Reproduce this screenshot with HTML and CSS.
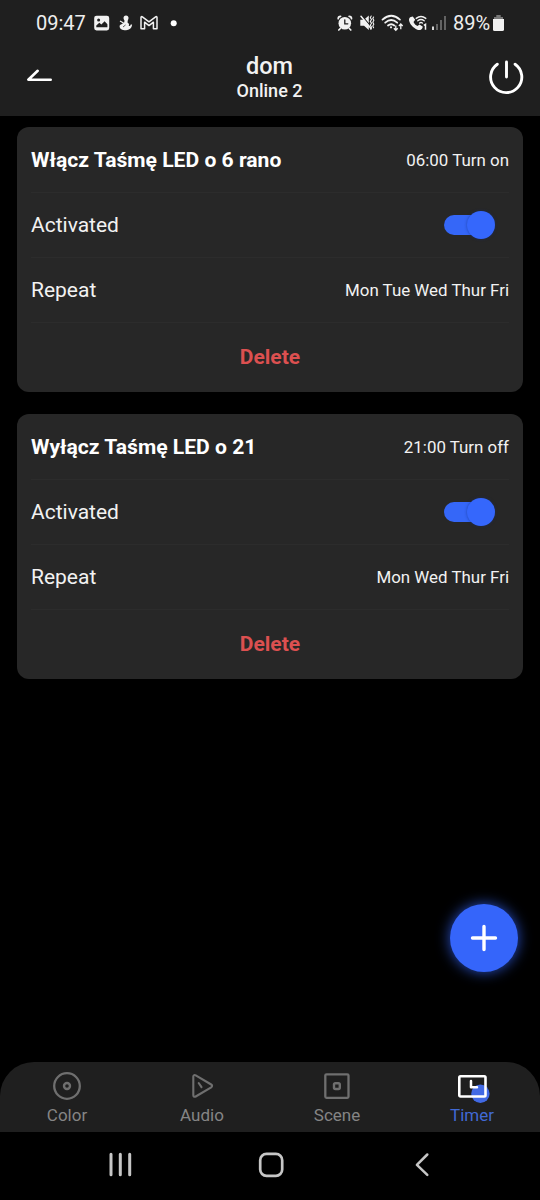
FILE: index.html
```html
<!DOCTYPE html>
<html lang="pl">
<head>
<meta charset="utf-8">
<title>Timer</title>
<link rel="stylesheet" href="styles.css">
</head>
<body>
<div class="screen">
  <header class="top">
    <div class="status">
      <span class="clock">09:47</span>
      <svg class="status-left" width="90" height="24" viewBox="90 10 90 24">
        <rect x="94.2" y="15.8" width="15" height="14.6" rx="2.3" fill="#f2f2f2"/>
        <circle cx="98.6" cy="20" r="1.5" fill="#1f1f1f"/>
        <path d="M96.3 27.3v-1.8l3-2.7 2.1 1.8 3.2-3.4 2.8 3v3.1z" fill="#1f1f1f"/>
        <circle cx="126" cy="18" r="2.5" fill="#f2f2f2"/>
        <path d="M124.5 19.5h3.4l-.4 3.1c1.6.9 1.9 2.3 1.2 3.5 1.2-.1 1.8-.7 2-1.7l1.4.2c-.3 3.8-3 5.7-6.3 5.6-3.7 0-6.2-1.7-6.2-3.8 0-1.2.8-2 2-2.1l2.7-2z" fill="#f2f2f2"/>
        <path d="M120 21l3.5 2M123.3 26.2l2.3-2" stroke="#f2f2f2" stroke-width="1.2"/>
        <path d="M123 27l2.6-2.1" stroke="#1f1f1f" stroke-width=".7"/>
        <path d="M141 28.7V17.5c0-.7.8-1.1 1.4-.7l6.6 5 6.6-5c.6-.4 1.4 0 1.4.7v11.2h-3.6v-6.5l-4.4 3.4-4.4-3.4v6.5z" fill="none" stroke="#f2f2f2" stroke-width="1.5" stroke-linejoin="round"/>
        <circle cx="173.7" cy="23.2" r="3" fill="#fff"/>
      </svg>
      <svg class="status-right" width="116" height="24" viewBox="334 10 116 24">
        <g fill="none" stroke="#f2f2f2" stroke-linecap="round">
          <circle cx="344.8" cy="23.3" r="6.3" fill="#f2f2f2" stroke="none"/>
          <path d="M344.8 19.8v4h3" stroke="#1f1f1f" stroke-width="1.3"/>
          <path d="M338.2 18.7c0-1.6 1-2.4 2.4-2.4M351.5 18.7c0-1.6-1-2.4-2.4-2.4M340.3 28.5l-1.5 1.5M349.3 28.5l1.5 1.5" stroke-width="1.7"/>
          <path d="M360.3 19.7h3.7l4.8-4.1v14.3l-4.8-4.2h-3.7z" fill="#f2f2f2" stroke="none"/>
          <path d="M361.8 15.6l10 12" stroke="#1f1f1f" stroke-width="1.3"/>
          <path d="M361 16.3l10.2 12.5" stroke-width="1.5"/>
          <path d="M371.2 16l-.9 1.7 1.2 1.8-1.2 1.9 1.2 1.9-1.2 1.9 1.2 1.9-.9 2M373.6 17l-.8 1.5 1 1.8-1 2 1 2-1 1.8.8 1.6" stroke-width="1.1"/>
          <path d="M382.5 19.6q8.8-7.8 17.4 0M385.2 22.7q6-5.3 12 0M388 25.5q3.2-2.6 6.3 0" stroke-width="1.8"/>
          <circle cx="391" cy="27.3" r="1.1" fill="#f2f2f2" stroke="none"/>
          <path d="M395.8 25.5v4.5M393.9 28.2l1.9 2 1.9-2M400.8 29.2v-5M398.9 26l1.9-2 1.9 2" stroke-width="1.3" stroke-linecap="butt"/>
          <path d="M410.8 17.1l2-.7 2.4 3.4-1.7 2.1c.9 1.9 2.1 3.2 4 4.1l2-1.6 3.4 2.3-.9 2c-1 1.4-3 1.7-5.2.7-3.6-1.6-6.8-4.9-7.7-8.6-.3-1.5.2-3.1 1.7-3.7z" fill="#f2f2f2" stroke="none"/>
          <path d="M416.2 18.4q4.8-3.8 9.6 0M417.8 20.8q3.2-2.5 6.4 0M419.6 23q1.4-1 2.8 0" stroke-width="1.4"/>
          <path d="M423.8 25.4l1.7-1v5.4" stroke-width="1.5" stroke-linecap="butt"/>
        </g>
        <path d="M433 26.6V30" stroke="#eee" stroke-width="1.8"/>
        <path d="M437 24V30M441 20V30M445 16V30" stroke="#6b6b6b" stroke-width="1.8"/>
      </svg>
      <span class="percent">89%</span>
      <svg width="11" height="18" viewBox="0 0 11 18"><path d="M3.3 1h4.4v2H10v4H1V3h2.3z" fill="#777"/><path d="M0 5h11v10.4a1.6 1.6 0 0 1-1.6 1.6H1.6A1.6 1.6 0 0 1 0 15.4z" fill="#f2f2f2"/></svg>
    </div>
    <div class="bar">
      <svg class="back" width="30" height="16" viewBox="24 67 30 16"><path d="M37.7 70.8l-9.4 8.9h22.4" fill="none" stroke="#fff" stroke-width="2.6" stroke-linecap="round" stroke-linejoin="round"/></svg>
      <div class="heading"><h1>dom</h1><p>Online 2</p></div>
      <svg class="power" width="38" height="38" viewBox="487 58 38 38"><path d="M497.3 64.2a15.6 15.6 0 1 0 17.8 0M506.5 62v15" fill="none" stroke="#fff" stroke-width="2.9" stroke-linecap="round"/></svg>
    </div>
  </header>

  <main class="timers">
    <section class="card">
      <div class="row"><h2 class="name">Włącz Taśmę LED o 6 rano</h2><span class="value">06:00 Turn on</span></div>
      <div class="row"><span class="label">Activated</span><span class="switch"><i class="track"></i><i class="thumb"></i></span></div>
      <div class="row"><span class="label">Repeat</span><span class="value">Mon Tue Wed Thur Fri</span></div>
      <div class="delete">Delete</div>
    </section>
    <section class="card">
      <div class="row"><h2 class="name">Wyłącz Taśmę LED o 21</h2><span class="value">21:00 Turn off</span></div>
      <div class="row"><span class="label">Activated</span><span class="switch"><i class="track"></i><i class="thumb"></i></span></div>
      <div class="row"><span class="label">Repeat</span><span class="value">Mon Wed Thur Fri</span></div>
      <div class="delete">Delete</div>
    </section>
    <div class="add"><svg width="30" height="30" viewBox="0 0 30 30"><path d="M15 3.5v23M3.5 15h23" stroke="#fff" stroke-width="3.4" stroke-linecap="round"/></svg></div>
  </main>

  <nav class="tabs">
    <div class="tab"><svg width="32" height="32" viewBox="0 0 32 32" fill="none" stroke="#6f6f6f"><circle cx="16" cy="16" r="12.8" stroke-width="2.3"/><circle cx="16" cy="16" r="3" stroke-width="2.4"/></svg><span>Color</span></div>
    <div class="tab"><svg width="32" height="32" viewBox="0 0 32 32" fill="none" stroke="#6f6f6f" stroke-width="2.1" stroke-linecap="round"><path d="M7.3 6.5v18.8c0 1.5 1.4 1.8 2.4 1.2l15.5-9.2c1.2-.8 1.2-2.1 0-2.8L9.7 5.3C8.7 4.7 7.3 5 7.3 6.5z"/><path d="M12.7 13l2.8 4.2"/></svg><span>Audio</span></div>
    <div class="tab"><svg width="32" height="32" viewBox="0 0 32 32" fill="none" stroke="#6f6f6f"><rect x="4.3" y="4.4" width="23.2" height="23.4" rx="1.2" stroke-width="2.3"/><rect x="13" y="13.2" width="5.8" height="5.8" rx="1.4" stroke-width="2.4"/></svg><span>Scene</span></div>
    <div class="tab active"><svg width="32" height="32" viewBox="0 0 32 32" fill="none"><circle cx="24.4" cy="23.7" r="9.2" fill="#4169e4"/><rect x="3.3" y="6.2" width="26.2" height="20.3" rx="1.2" stroke="#fff" stroke-width="2.6"/><path d="M15 11v6.3h6" stroke="#fff" stroke-width="2.5" stroke-linecap="round" stroke-linejoin="round"/></svg><span>Timer</span></div>
  </nav>
  <footer class="system">
    <svg width="540" height="68" viewBox="0 1132 540 68" fill="none" stroke="#c6c6c6" stroke-linecap="round">
      <path d="M111 1154.3v20.4M120.3 1154.3v20.4M129.7 1154.3v20.4" stroke-width="3"/>
      <rect x="260.2" y="1153.9" width="22" height="22" rx="6.3" stroke-width="2.7"/>
      <path d="M427.3 1154.5l-10.4 10.4 10.4 10" stroke-width="2.5" stroke-linejoin="round"/>
    </svg>
  </footer>
</div>
</body>
</html>
```
FILE: styles.css
```css
* { box-sizing: border-box; margin: 0; padding: 0; }
body { background: #000; color: #f2f2f2; font-family: Roboto, sans-serif; }
svg { display: block; flex: none; }
.screen { width: 540px; height: 1200px; display: flex; flex-direction: column; overflow: hidden; }

.top { height: 116px; background: #1f1f1f; }
.status { height: 46px; padding: 0 36px; display: flex; align-items: center; }
.clock { width: 54px; font-size: 20px; white-space: nowrap; color: #eee; }
.status-left, .status-right { margin-top: -2px; }
.status-right { margin-left: auto; }
.percent { width: 41px; margin-left: 3px; margin-right: -1px; font-size: 20px; white-space: nowrap; color: #eee; }
.bar { height: 70px; padding: 0 15px 0 24px; display: flex; justify-content: space-between; align-items: flex-start; }
.back { margin-top: 21px; }
.power { margin-top: 12px; }
.heading { margin-top: 6px; text-align: center; margin-left: -2px; }
.heading h1 { font-size: 23.5px; font-weight: 500; line-height: 29px; }
.heading p { font-size: 18px; font-weight: 500; line-height: 20px; }

.timers { flex: 1; padding: 11px 17px 0; display: flex; flex-direction: column; gap: 22.5px; }
.card { height: 264.5px; padding: 0 14px; border-radius: 12px; background: #272727; }
.row { height: 64.7px; display: flex; align-items: center; justify-content: space-between; border-bottom: 1px solid #2c2c2c; }
.row:first-child { height: 66.3px; }
.name { font-size: 21.1px; font-weight: 700; color: #fff; }
.label { font-size: 21px; }
.value { font-size: 16.9px; }
.switch { width: 51px; height: 28px; margin-right: 14px; display: grid; align-items: center; }
.track, .thumb { grid-area: 1 / 1; }
.track { width: 40px; height: 20px; border-radius: 10px; background: #3567f8; }
.thumb { width: 28px; height: 28px; justify-self: end; border-radius: 50%; background: #3567fc; box-shadow: 0 0 3px rgba(20, 45, 120, .6); }
.delete { height: 69px; display: flex; align-items: center; justify-content: center; font-size: 21px; font-weight: 700; color: #dc5050; }
.add { width: 68px; height: 68px; margin: auto 5px 90px auto; display: grid; place-items: center; border-radius: 50%; background: #3565fa; box-shadow: 0 0 14px rgba(53, 101, 250, .8); }

.tabs { height: 70px; padding-top: 8px; display: grid; grid-template-columns: repeat(4, 1fr); background: #1f1f1f; border-radius: 34px 34px 0 0; }
.tab { display: flex; flex-direction: column; align-items: center; font-size: 17px; line-height: 20px; color: #858585; }
.tab svg { overflow: visible; margin-left: -1px; }
.tab span { margin-top: 3px; margin-left: -1px; }
.active { color: #4169d4; }
.system { height: 68px; }
```
